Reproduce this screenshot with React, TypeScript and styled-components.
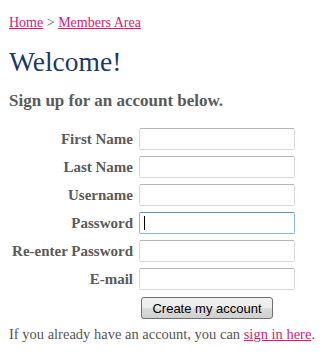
import React from "react";
import styled, { createGlobalStyle } from "styled-components";

const Global = createGlobalStyle`
  html, body { margin: 0; padding: 0; background: #fff; }
  body { font-family: "Liberation Serif", "Times New Roman", serif; color: #555; }
`;

const Page = styled.div`
  padding: 15px 9px 0 9px;
`;

const Crumbs = styled.div`
  font-size: 14px;
  line-height: 16px;
  color: #555;
`;

const Link = styled.a`
  color: #e0186f;
  text-decoration: underline;
`;

const Title = styled.h1`
  margin: 15px 0 0 0;
  font-weight: normal;
  font-size: 27.5px;
  line-height: 32px;
  color: #1b3a64;
`;

const Sub = styled.h2`
  margin: 13px 0 0 0;
  font-size: 17px;
  line-height: 20px;
  font-weight: bold;
  color: #5a5a5a;
`;

const Form = styled.form`
  margin-top: 17px;
  display: grid;
  grid-template-columns: 124px 156px;
  column-gap: 6px;
  row-gap: 6px;
  align-items: center;
`;

const Label = styled.label`
  text-align: right;
  white-space: nowrap;
  font-weight: bold;
  font-size: 15px;
  line-height: 22px;
  color: #5a5a5a;
`;

const Input = styled.input`
  box-sizing: border-box;
  width: 156px;
  height: 22px;
  margin: 0;
  padding: 2px 4px;
  border: 1px solid #d7dbe0;
  border-top-color: #b5b8bd;
  border-radius: 2px;
  background: #fff;
  outline: none;
  font-family: "Liberation Sans", Arial, sans-serif;
  font-size: 13px;
`;

const Caret = styled.span`
  display: block;
  width: 1px;
  height: 14px;
  background: #000;
`;

const FocusBox = styled.div`
  box-sizing: border-box;
  width: 156px;
  height: 22px;
  padding: 3px 4px;
  border: 1px solid #8db3dc;
  border-top-color: #5f92c8;
  border-radius: 2px;
`;

const ButtonCell = styled.div`
  grid-column: 2;
  padding-left: 2px;
  padding-top: 1px;
`;

const Button = styled.button`
  box-sizing: border-box;
  width: 132px;
  height: 22px;
  padding: 0;
  border: 1px solid #707070;
  border-radius: 3px;
  background: linear-gradient(#f2f2f2 0%, #ebebeb 50%, #dddddd 51%, #cfcfcf 100%);
  font-family: "Liberation Sans", Arial, sans-serif;
  font-size: 13px;
  color: #000;
`;

const Footer = styled.p`
  margin: 6px 0 0 0;
  font-size: 14.5px;
  line-height: 18px;
  white-space: nowrap;
  color: #555;
`;

const fields = ["First Name", "Last Name", "Username", "Password", "Re-enter Password", "E-mail"];

export default function App() {
  return (
    <>
      <Global />
      <Page>
        <Crumbs>
          <Link href="#">Home</Link> &gt; <Link href="#">Members Area</Link>
        </Crumbs>
        <Title>Welcome!</Title>
        <Sub>Sign up for an account below.</Sub>
        <Form onSubmit={(e) => e.preventDefault()}>
          {fields.map((f) => (
            <React.Fragment key={f}>
              <Label>{f}</Label>
              {f === "Password" ? (
                <FocusBox>
                  <Caret />
                </FocusBox>
              ) : (
                <Input type="text" />
              )}
            </React.Fragment>
          ))}
          <ButtonCell>
            <Button type="submit">Create my account</Button>
          </ButtonCell>
        </Form>
        <Footer>
          If you already have an account, you can <Link href="#">sign in here</Link>.
        </Footer>
      </Page>
    </>
  );
}
